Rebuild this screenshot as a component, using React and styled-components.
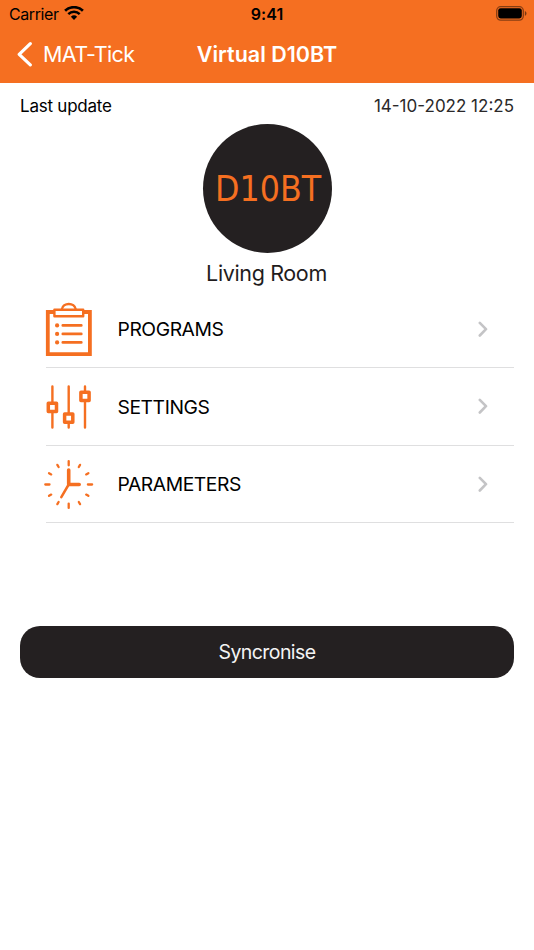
import React from "react";
import styled, { createGlobalStyle } from "styled-components";

const ORANGE = "#f56f21";
const DARK = "#242021";

function App() {
  return (
    <Screen>
      <GlobalStyle />
      <Header>
        <StatusBar>
          <Carrier>
            <span>Carrier</span>
            <WifiIcon />
          </Carrier>
          <Time>9:41</Time>
          <BatteryIcon />
        </StatusBar>
        <NavBar>
          <BackButton>
            <BackIcon />
            <span>MAT-Tick</span>
          </BackButton>
          <Title>Virtual D10BT</Title>
        </NavBar>
      </Header>

      <Content>
        <UpdateRow>
          <UpdateLabel>Last update</UpdateLabel>
          <UpdateDate>14-10-2022 12:25</UpdateDate>
        </UpdateRow>
        <Device>
          <Badge>
            <BadgeText>D10BT</BadgeText>
          </Badge>
          <Room>Living Room</Room>
        </Device>
        <Menu>
          <MenuItem>
            <ClipboardIcon />
            <MenuLabel>PROGRAMS</MenuLabel>
            <ChevronIcon />
          </MenuItem>
          <MenuItem>
            <SlidersIcon />
            <MenuLabel>SETTINGS</MenuLabel>
            <ChevronIcon />
          </MenuItem>
          <MenuItem>
            <ClockIcon />
            <MenuLabel>PARAMETERS</MenuLabel>
            <ChevronIcon />
          </MenuItem>
        </Menu>
        <SyncButton>Syncronise</SyncButton>
      </Content>
    </Screen>
  );
}

export default App;

function WifiIcon() {
  return (
    <svg width="20" height="14" viewBox="0 0 20 14" fill="none" stroke="#000">
      <path d="M1.1 4.8a12.8 12.8 0 0 1 17.8 0" strokeWidth="2.7" />
      <path d="M4.3 8.1a8.2 8.2 0 0 1 11.4 0" strokeWidth="2.5" />
      <path d="M10 14 6.9 10.8a4.5 4.5 0 0 1 6.2 0Z" fill="#000" stroke="none" />
    </svg>
  );
}

function BatteryIcon() {
  return (
    <svg width="31" height="15" viewBox="0 0 31 15">
      <rect
        x="0.7"
        y="0.7"
        width="26.6"
        height="13.4"
        rx="4"
        fill="none"
        stroke="#000"
        strokeOpacity="0.45"
        strokeWidth="1.3"
      />
      <rect x="2.2" y="2.2" width="23.6" height="10.2" rx="2.4" />
      <path d="M28.9 5v4.8c2.1-.7 2.1-4.1 0-4.8Z" fillOpacity="0.5" />
    </svg>
  );
}

function BackIcon() {
  return (
    <svg width="16" height="26" viewBox="0 0 16 26" fill="none">
      <path
        d="M13.3 2.7 2.2 13.3l11.1 10.6"
        stroke="#fff"
        strokeWidth="3.2"
        strokeLinecap="round"
        strokeLinejoin="round"
      />
    </svg>
  );
}

function ChevronIcon() {
  return (
    <svg width="10" height="16" viewBox="0 0 10 16" fill="none">
      <path
        d="M1.8 1.9 8 8.2l-6.2 6.3"
        stroke="#c4c4c6"
        strokeWidth="2.6"
        strokeLinecap="round"
        strokeLinejoin="round"
      />
    </svg>
  );
}

function ClipboardIcon() {
  return (
    <MenuIcon viewBox="0 0 50 56" fill="none" stroke={ORANGE}>
      <path d="M10.5 11H3.8v42.2h42.1V11h-6.6" strokeWidth="3.8" />
      <path
        d="M10.4 8.8h28.8V15.2H10.4Z"
        strokeWidth="2.4"
        strokeLinejoin="round"
      />
      <path d="M17.8 8.4C19 1.2 30.6 1.2 31.8 8.4" strokeWidth="2.4" />
      <path
        d="M18.8 24.4h18.5M18.8 32.9h18.5M18.8 41.4h18.5"
        strokeWidth="2.7"
        strokeLinecap="round"
      />
      <g fill={ORANGE} stroke="none">
        <circle cx="13.1" cy="24.4" r="2.1" />
        <circle cx="13.1" cy="32.9" r="2.1" />
        <circle cx="13.1" cy="41.4" r="2.1" />
      </g>
    </MenuIcon>
  );
}

function SlidersIcon() {
  return (
    <MenuIcon viewBox="0 0 50 56" fill="#fff" stroke={ORANGE}>
      <path
        d="M8.4 8.4v41.2M24.7 8.4v41.2M41 8.4v41.2"
        strokeWidth="2.4"
        strokeLinecap="round"
      />
      <g strokeWidth="3.5" strokeLinejoin="round">
        <rect x="4.3" y="25.2" width="8.2" height="8.2" />
        <rect x="20.6" y="36" width="8.2" height="8.2" />
        <rect x="36.9" y="14.3" width="8.2" height="8.2" />
      </g>
    </MenuIcon>
  );
}

function ClockIcon() {
  const marks = [...Array(12).keys()];
  return (
    <MenuIcon viewBox="0 0 50 56" fill="none" stroke={ORANGE}>
      {marks.map((i) => (
        <path
          key={i}
          d={i % 3 === 0 ? "M24.7 5.1v4.2" : "M24.7 5.8v2.5"}
          strokeWidth="2.3"
          strokeLinecap="round"
          transform={`rotate(${i * 30} 24.7 28.5)`}
        />
      ))}
      <path d="M24.7 28.5 17.3 41.2" strokeWidth="2.5" strokeLinecap="round" />
      <path
        d="M24.7 14.1v14.4h10.5"
        strokeWidth="3.6"
        strokeLinecap="round"
        strokeLinejoin="round"
      />
    </MenuIcon>
  );
}

const GlobalStyle = createGlobalStyle`
  * {
    box-sizing: border-box;
  }
  body {
    margin: 0;
    background-color: white;
    font-family: Inter, "Liberation Sans", sans-serif;
  }
`;

const Screen = styled.div`
  min-height: 950px;
  overflow: hidden;
  background-color: white;
`;
const Header = styled.header`
  height: 83px;
  background-color: ${ORANGE};
`;
const StatusBar = styled.div`
  display: grid;
  grid-template-columns: 1fr auto 1fr;
  align-items: center;
  height: 27px;
  padding: 0 7px 0 9px;
  color: black;
  > svg {
    justify-self: end;
  }
`;
const Carrier = styled.div`
  display: flex;
  align-items: center;
  gap: 5px;
  font-size: 16px;
  letter-spacing: -0.4px;
  svg {
    margin-top: -1px;
  }
`;
const Time = styled.span`
  padding-right: 2px;
  font-size: 16px;
  font-weight: 600;
  letter-spacing: 0.1px;
`;
const NavBar = styled.nav`
  display: grid;
  grid-template-columns: 1fr auto 1fr;
  align-items: center;
  height: 54px;
  padding: 0 17px;
  color: white;
`;
const BackButton = styled.button`
  display: flex;
  align-items: center;
  gap: 10px;
  padding: 0;
  border: none;
  background: none;
  color: white;
  font-family: inherit;
  font-size: 21.5px;
  letter-spacing: -0.6px;
  cursor: pointer;
`;
const Title = styled.h1`
  margin: 0;
  font-size: 21.5px;
  font-weight: 600;
`;
const Content = styled.main`
  padding: 0 20px;
`;
const UpdateRow = styled.div`
  display: flex;
  align-items: center;
  justify-content: space-between;
  height: 41px;
  padding-top: 4px;
  font-size: 17px;
`;
const UpdateLabel = styled.span`
  color: black;
  letter-spacing: -0.23px;
`;
const UpdateDate = styled.span`
  color: #2a2829;
`;
const Device = styled.div`
  display: flex;
  flex-direction: column;
  align-items: center;
`;
const Badge = styled.div`
  display: flex;
  align-items: center;
  justify-content: center;
  width: 129px;
  height: 129px;
  border-radius: 50%;
  background-color: ${DARK};
  color: ${ORANGE};
`;
const BadgeText = styled.span`
  padding-left: 2px;
  font-family: "DejaVu Sans Condensed", "DejaVu Sans", sans-serif;
  font-size: 36px;
  font-stretch: condensed;
  transform: scaleX(0.98);
`;
const Room = styled.div`
  height: 38px;
  padding-right: 1px;
  line-height: 40px;
  color: #1f1c1d;
  font-size: 21.5px;
  letter-spacing: -0.36px;
`;
const Menu = styled.div`
  padding-left: 26px;
`;
const MenuItem = styled.div`
  display: flex;
  align-items: center;
  height: 77.33px;
  padding-right: 26px;
  border-bottom: 1px solid #dfdfe0;
`;
const MenuIcon = styled.svg`
  width: 50px;
  height: 56px;
  margin-left: -2px;
`;
const MenuLabel = styled.span`
  flex: 1;
  margin-left: 23.5px;
  padding-top: 0.4px;
  color: black;
  font-size: 19.3px;
  letter-spacing: -0.43px;
`;
const SyncButton = styled.button`
  display: block;
  width: 100%;
  height: 52px;
  margin-top: 103px;
  border: none;
  border-radius: 20px;
  background-color: ${DARK};
  color: #f4f4f4;
  font-family: inherit;
  font-size: 19.5px;
  letter-spacing: -0.58px;
  cursor: pointer;
`;
